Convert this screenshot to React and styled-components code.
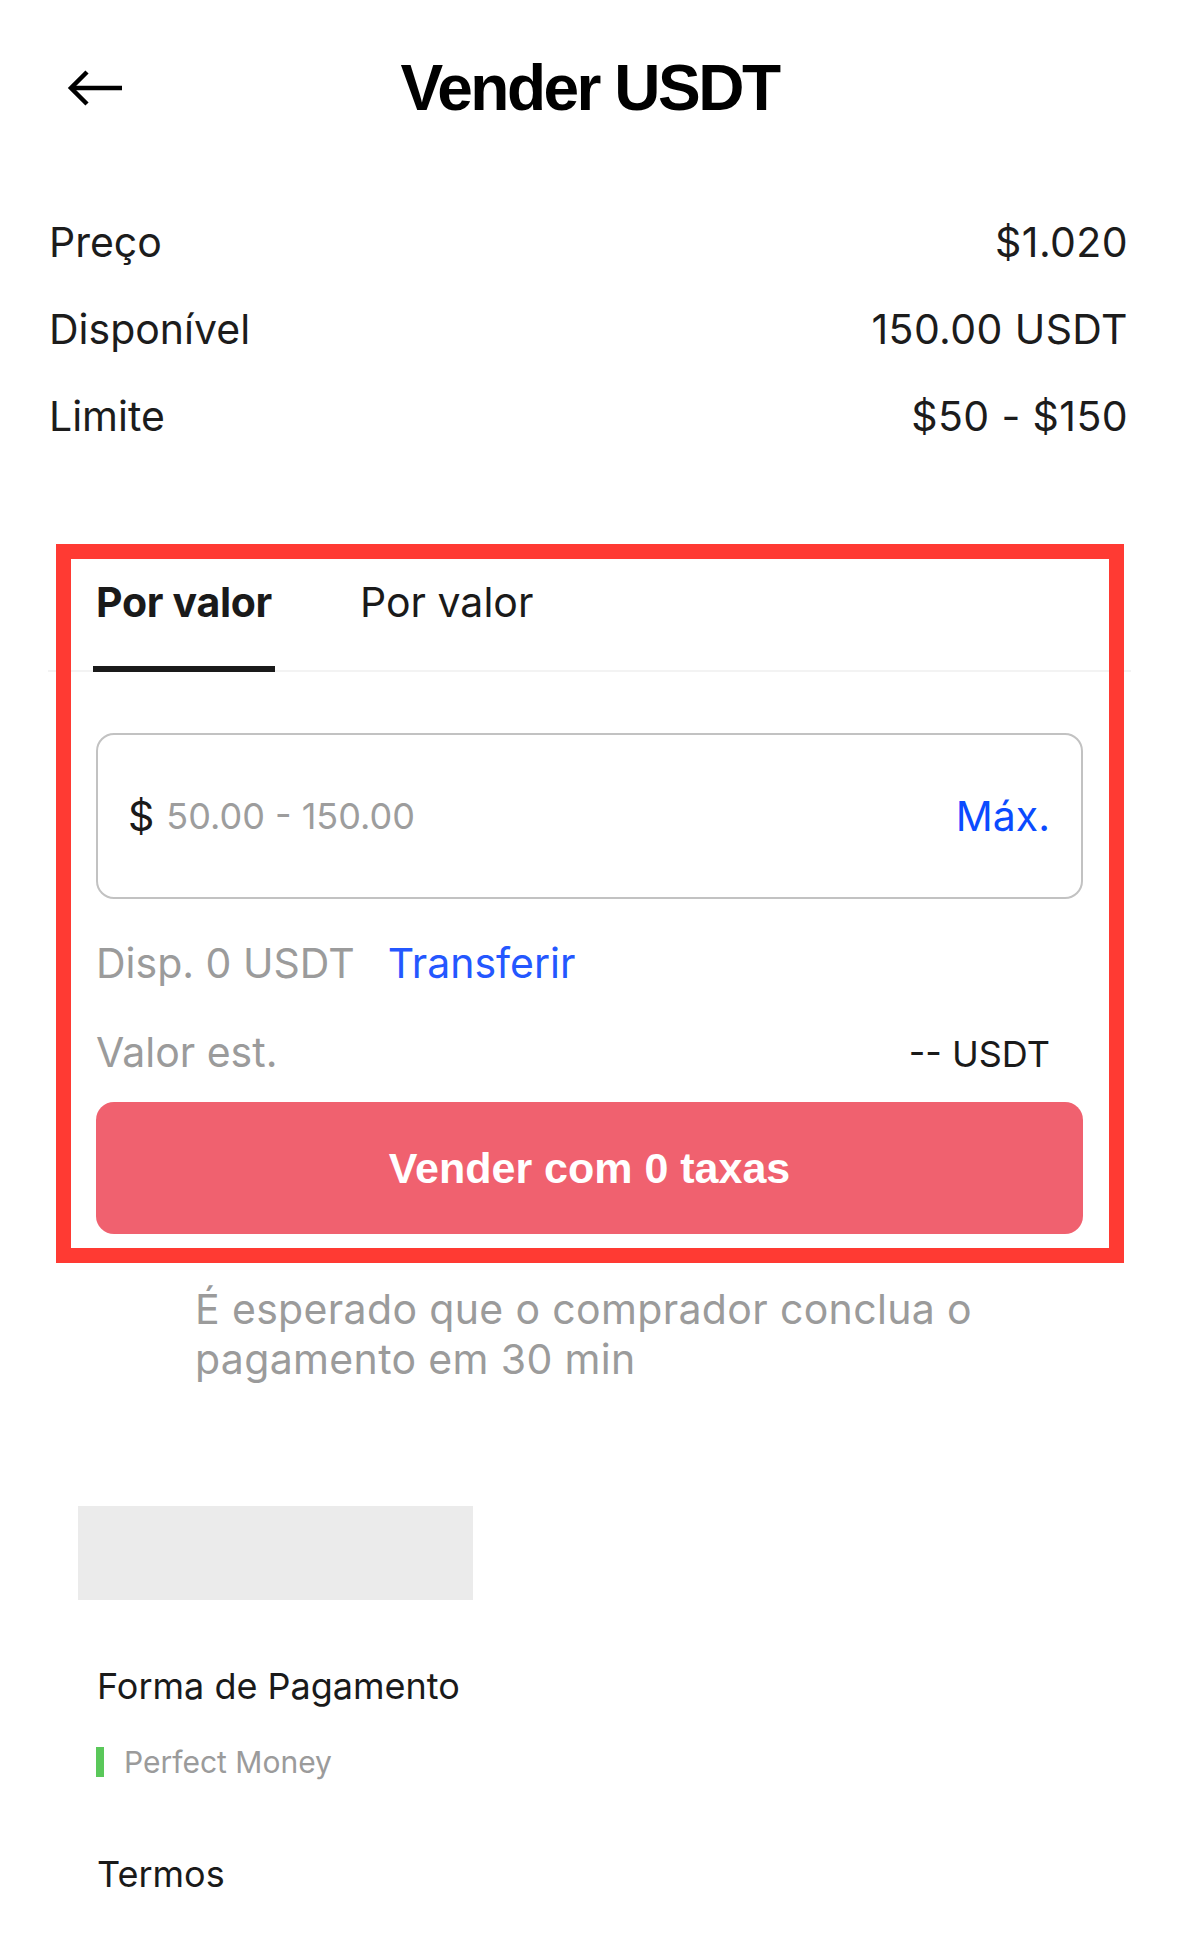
import React from "react";
import styled, { createGlobalStyle } from "styled-components";

const GlobalStyle = createGlobalStyle`
  body {
    margin: 0;
    background: #fff;
    font-family: Inter, "Noto Sans", sans-serif;
    color: #1a1a1a;
  }
`;

const Page = styled.div`
  width: 1179px;
  min-height: 1958px;
  background: #fff;
`;

const Header = styled.header`
  height: 176px;
  display: grid;
  grid-template-columns: 1fr auto 1fr;
  align-items: center;

  .back {
    padding-left: 66px;
    display: flex;
    align-items: center;
  }

  h1 {
    margin: 0;
    font-family: "Liberation Sans", Arial, sans-serif;
    font-weight: 700;
    font-size: 64px;
    letter-spacing: -2.5px;
    line-height: 1;
    color: #000;
  }
`;

const InfoList = styled.div`
  margin-top: 23px;
  padding: 0 51px 0 49px;
`;

const InfoRow = styled.div`
  display: flex;
  justify-content: space-between;
  font-size: 41px;
  line-height: 87px;
  color: #1c1c1c;

  span:last-child {
    letter-spacing: 0.4px;
  }
`;

const Panel = styled.section`
  position: relative;
  margin: 84px 48px 0;
  padding: 33px 0 29px;
`;

const Highlight = styled.div`
  position: absolute;
  top: 0;
  bottom: 0;
  left: 8px;
  right: 7px;
  border: 15px solid #ff3a33;
  pointer-events: none;
`;

const Tabs = styled.div`
  display: flex;
  gap: 82px;
  padding-left: 45px;
  border-bottom: 2px solid #f3f3f3;
`;

const Tab = styled.div`
  padding: 0 3px 39px;
  margin-bottom: -2px;
  font-size: 41px;
  font-weight: ${(p) => (p.$active ? 700 : 400)};
  letter-spacing: ${(p) => (p.$active ? "-0.3px" : "0")};
  color: #1a1a1a;
  border-bottom: 6px solid ${(p) => (p.$active ? "#1a1a1a" : "transparent")};
`;

const Body = styled.div`
  padding: 0 48px;
`;

const AmountField = styled.div`
  margin-top: 61px;
  height: 166px;
  box-sizing: border-box;
  border: 2px solid #c2c2c2;
  border-radius: 18px;
  padding: 0 31px 0 30px;
  display: flex;
  align-items: center;

  .currency {
    font-size: 41px;
    color: #1a1a1a;
    margin-right: 12px;
  }

  .placeholder {
    flex: 1;
    font-size: 36px;
    color: #9d9d9d;
  }

  .max {
    font-size: 41px;
    color: #0b4bff;
  }
`;

const BalanceRow = styled.div`
  margin-top: 39px;
  display: flex;
  gap: 33px;
  font-size: 41px;
  color: #9b9b9b;

  a {
    color: #2457ff;
    text-decoration: none;
  }
`;

const EstimateRow = styled.div`
  margin-top: 39px;
  padding-right: 33px;
  display: flex;
  justify-content: space-between;
  align-items: baseline;
  font-size: 41px;
  color: #9b9b9b;

  span:last-child {
    font-size: 36px;
    color: #1a1a1a;
  }
`;

const SellButton = styled.button`
  margin-top: 25px;
  width: 100%;
  height: 132px;
  border: 0;
  border-radius: 18px;
  background: #f0616f;
  color: #fff;
  font-family: "Liberation Sans", Arial, sans-serif;
  font-weight: 700;
  font-size: 43px;
  display: block;
`;

const Note = styled.p`
  margin: 21px 0 0;
  padding: 0 96px 0 195px;
  font-size: 41px;
  line-height: 50px;
  letter-spacing: 0.35px;
  color: #9b9b9b;
`;

const Placeholder = styled.div`
  margin: 122px 0 0 78px;
  width: 395px;
  height: 94px;
  background: #ebebeb;
`;

const SectionTitle = styled.div`
  margin: ${(p) => p.$top}px 0 0 97px;
  font-size: 36px;
  color: #1a1a1a;
`;

const MethodTag = styled.div`
  margin: 36px 0 0 96px;
  display: flex;
  align-items: center;
  gap: 20px;
  font-size: 30px;
  color: #9b9b9b;

  &::before {
    content: "";
    width: 8px;
    height: 30px;
    background: #5ac85a;
  }
`;

const BackArrow = () => (
  <svg width="58" height="40" viewBox="0 0 58 40" fill="none">
    <path d="M56 20H5" stroke="#000" strokeWidth="4.5" />
    <path d="M21 4L5 20L21 36" stroke="#000" strokeWidth="4.5" />
  </svg>
);

const info = [
  ["Preço", "$1.020"],
  ["Disponível", "150.00 USDT"],
  ["Limite", "$50 - $150"],
];

export default function App() {
  return (
    <>
      <GlobalStyle />
      <Page>
        <Header>
          <div className="back">
            <BackArrow />
          </div>
          <h1>Vender USDT</h1>
          <div />
        </Header>

        <InfoList>
          {info.map(([label, value]) => (
            <InfoRow key={label}>
              <span>{label}</span>
              <span>{value}</span>
            </InfoRow>
          ))}
        </InfoList>

        <Panel>
          <Tabs>
            <Tab $active>Por valor</Tab>
            <Tab>Por valor</Tab>
          </Tabs>
          <Body>
            <AmountField>
              <span className="currency">$</span>
              <span className="placeholder">50.00 - 150.00</span>
              <span className="max">Máx.</span>
            </AmountField>
            <BalanceRow>
              <span>Disp. 0 USDT</span>
              <a href="#">Transferir</a>
            </BalanceRow>
            <EstimateRow>
              <span>Valor est.</span>
              <span>-- USDT</span>
            </EstimateRow>
            <SellButton>Vender com 0 taxas</SellButton>
          </Body>
          <Highlight />
        </Panel>

        <Note>É esperado que o comprador conclua o pagamento em 30 min</Note>

        <Placeholder />

        <SectionTitle $top={64}>Forma de Pagamento</SectionTitle>
        <MethodTag>Perfect Money</MethodTag>
        <SectionTitle $top={72}>Termos</SectionTitle>
      </Page>
    </>
  );
}
